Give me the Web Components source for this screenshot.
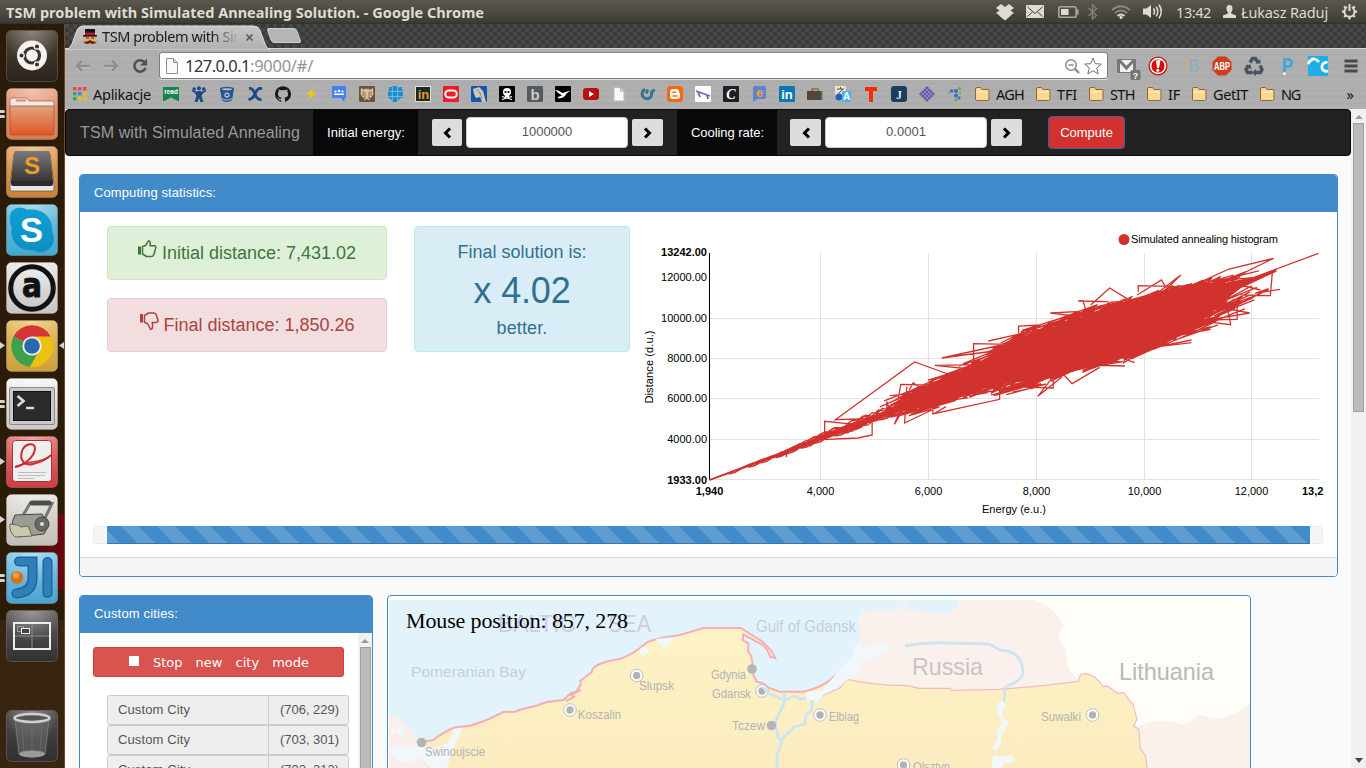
<!DOCTYPE html>
<html lang="en">
<head>
<meta charset="utf-8">
<title>TSM problem with Simulated Annealing Solution.</title>
<style>
html,body{margin:0;height:768px;width:1366px;overflow:hidden;background:#2d1b09}
body{font-family:"Liberation Sans",Arial,sans-serif;font-size:13px;color:#333}
</style>
</head>
<body>
<desktop-shell></desktop-shell>
<script>
const make = (name, css, html, after) => customElements.define(name, class extends HTMLElement {
  connectedCallback() {
    if (this.shadowRoot) return;
    const root = this.attachShadow({ mode: 'open' });
    root.innerHTML = `<style>:host{display:block;box-sizing:border-box}*{box-sizing:border-box}${css}</style>` +
      (typeof html === 'function' ? html(this) : html);
    if (after) after(this, root);
  }
});

/* ---------- icon library ---------- */
const fav = (bg, inner, r = 1) => `<rect width="16" height="16" rx="${r}" fill="${bg}"/>${inner}`;
const T = (t, x, y, s, f, extra = '') => `<text x="${x}" y="${y}" font-size="${s}" fill="${f}" text-anchor="middle" font-weight="bold" ${extra}>${t}</text>`;
const I = {
  apps: [16, 16, ['#ed4a3d','#ed4a3d','#ed4a3d','#30a756','#3b82f0','#fbbc05','#30a756','#fbbc05','#fbbc05'].map((c, i) => `<rect x="${1 + (i % 3) * 5}" y="${1 + (i / 3 | 0) * 5}" width="3.4" height="3.4" fill="${c}"/>`).join('')],
  read: [16, 16, `<path d="M0 1h16v14.500l-8-4-8 4z" fill="#13854a"/>` + T('read', 8, 8, 6.500, '#fff')],
  jira: [16, 16, `<g fill="#1d4a85"><circle cx="3.200" cy="3" r="1.800"/><circle cx="8" cy="2.200" r="2"/><circle cx="12.800" cy="3" r="1.800"/><path d="M1 5.500q3 .5 4.500 4.500L3.500 16h3L8 12l1.500 4h3l-2-6Q12 6 15 5.500V4q-4 .5-7 4-3-3.500-7-4z"/><path d="M6 5h4v4H6z"/></g>`],
  bucket: [16, 16, `<path d="M1 3l2 11c2 2.500 8 2.500 10 0l2-11z" fill="#27578f"/><ellipse cx="8" cy="3" rx="7" ry="2.300" fill="#27578f"/><ellipse cx="8" cy="3.200" rx="5" ry="1" fill="#aebfd2"/><circle cx="8" cy="9" r="2.600" fill="#b9c8d9"/><circle cx="8" cy="9" r="1.300" fill="#27578f"/><path d="M3 12.500c2 2 8 2 10 0" stroke="#b5b5b5" fill="none"/>`],
  conf: [16, 16, `<g stroke="#1d4a85" stroke-width="2.800" fill="none"><path d="M2 2.500q4-.5 6 5.500t6.500 5.500"/><path d="M13 2q-3 1-5 6t-6.500 5.500"/></g><g fill="#1d4a85"><circle cx="13.500" cy="2.500" r="1.800"/></g>`],
  github: [16, 16, `<path fill="#181818" fill-rule="evenodd" d="M8 .2a8 8 0 0 0-2.530 15.590c.4.070.550-.170.550-.380v-1.490c-2.230.480-2.690-.950-2.690-.950-.360-.920-.890-1.170-.890-1.170-.730-.5.060-.490.060-.490.800.060 1.230.830 1.230.830.710 1.220 1.870.870 2.330.660.070-.520.280-.870.510-1.070-1.780-.2-3.640-.890-3.640-3.950 0-.870.310-1.590.820-2.150-.080-.2-.360-1.020.080-2.120 0 0 .670-.210 2.200.820a7.600 7.600 0 0 1 4 0c1.530-1.040 2.200-.820 2.200-.820.440 1.100.160 1.920.080 2.120.510.560.820 1.270.820 2.150 0 3.070-1.870 3.750-3.650 3.950.290.250.540.730.540 1.480v2.200c0 .210.150.460.550.380A8 8 0 0 0 8 .2z"/>`],
  bolt: [16, 16, `<path d="M11 1L3.500 9h4L5 15l8-8.500H8.500z" fill="#fec502"/>`],
  groups: [16, 16, `<path d="M1 0h14v12h-1.500v4l-4-4H1z" fill="#4283f3"/><g fill="#fff"><circle cx="4.500" cy="5.500" r="1.100"/><circle cx="8" cy="5" r="1.300"/><circle cx="11.500" cy="5.500" r="1.100"/><path d="M3 9V7.500h10V9z"/></g>`],
  eagle: [16, 16, fav('#6e5236', `<path d="M8 3.500c-.5-2-3-1-2.300.5L2 2l-.5 6 2.500 4 2-1-1 3.500 3-1.500 3 1.500-1-3.500 2 1 2.500-4L14 2l-3.700 2C10 2.500 8.500 2 8 3.500z" fill="#d8c29c"/><path d="M4 5v5M6 6v7M10 6v7M12 5v5" stroke="#8f7455"/>`)],
  dots: [16, 16, `<g fill="#1a8fcf"><circle cx="8" cy="8" r="7"/><path d="M1 4h4v8H1zM5 0h6v16H5zM11 4h5v8h-5zM2 1h3v3H2zM12 1h3v3h-3z"/></g><path d="M5.300 0v16M10.600 0v16M0 5.300h16M0 10.600h16" stroke="#8cc3e0" stroke-width=".8"/>`],
  moodle: [16, 16, fav('#122d2c', `<rect x=".5" y=".5" width="15" height="15" fill="none" stroke="#e6e2bf"/>` + T('in', 8.500, 13, 13, '#f29222'))],
  oracle: [16, 16, fav('#ee1c25', `<rect x="2.300" y="4.500" width="11.500" height="7" rx="3.500" fill="none" stroke="#fff" stroke-width="2"/>`)],
  photo: [16, 16, fav('#1557a7', `<path d="M2 3l6-2 4 4 3 11h-4L9 11 5 12 3 8z" fill="#d0c8ba"/><path d="M6 3l3 4M9 7l2 6" stroke="#8c8276"/>`)],
  skull: [16, 16, fav('#000', `<circle cx="8" cy="6" r="4" fill="#fff"/><rect x="6" y="8.500" width="4" height="2.500" fill="#fff"/><circle cx="6.500" cy="6" r="1.100"/><circle cx="9.500" cy="6" r="1.100"/><path d="M3 10.500l10 3M13 10.500L3 13.500" stroke="#fff" stroke-width="1.200"/>`)],
  bgrey: [16, 16, fav('#555a5c', T('b', 8, 13.500, 15, '#c9cccc'))],
  bird: [16, 16, fav('#000', `<path d="M0 4q4 0 7.500 3L15.500 4.500 11 8q-1 4-8 4.500V11l4-1.500Q3 7 0 4z" fill="#fff"/>`)],
  yt: [16, 16, `<rect y="2" width="16" height="12" rx="3" fill="#b8120f"/><path d="M6 5l5 3-5 3z" fill="#fff"/>`],
  doc: [16, 16, `<path d="M3 1.500h6.500L13 5v10H3z" fill="#f8f8f8" stroke="#bdbdbd"/><path d="M9.500 1.500V5H13" fill="#ddd" stroke="#aaa"/>`],
  swirl: [16, 16, `<path d="M6 3.500A4.800 4.800 0 1 0 12.500 6.500L15.500 3.500M7.500 7.500l1-4" stroke="#37708f" stroke-width="3" fill="none"/>`],
  blogger: [16, 16, fav('#f9690b', `<path d="M6 3h3q3 0 3 3 0 1 1 1v3q0 3-3 3H6q-3 0-3-3V6q0-3 3-3z" fill="#fff"/><path d="M6 6.300h2.500M6 9.900h4" stroke="#f9690b" stroke-width="1.500" stroke-linecap="round"/>`, 3)],
  slope: [16, 16, fav('#fff', `<path d="M1 5l14 5M3 6l2 5M12 9l1 4" stroke="#7c5fb5" stroke-width="1.800"/>`)],
  cbox: [16, 16, fav('#1e1e26', T('C', 8, 13, 14, '#fff', 'font-style="italic" font-family="Liberation Serif"'))],
  echat: [16, 16, `<path d="M3 0h10q2 0 2 2v9q0 2-2 2H6l-4 3V2z" fill="#5b86cf"/>` + T('e', 8.500, 10.500, 13, '#f6a12d')],
  linkedin: [16, 16, fav('#0b77b5', T('in', 8, 13, 13, '#fff'))],
  bag: [16, 16, `<rect x="0" y="5" width="16" height="9" fill="#55433c"/><path d="M5 5V3h6v2" fill="none" stroke="#6e7b57" stroke-width="1.500"/><path d="M14.500 5h1.500v9h-1.500z" fill="#6aa07e"/>`],
  trans: [16, 16, `<rect x="0" y="0" width="11" height="9" fill="#e7e3cd"/><path d="M2 3h7M5.500 1v2M3 8l5-5" stroke="#555"/><circle cx="4" cy="11" r="3.500" fill="#1e63b5"/><rect x="7" y="5" width="9" height="11" rx="1" fill="#47b4ee"/>` + T('A', 11.500, 14, 10, '#fff')],
  tred: [16, 16, `<path d="M2 1h12v4H10v11H6V5H2z" fill="#f52c07"/>`],
  djs: [16, 16, fav('#1c3d5e', T('J', 8, 12.500, 12, '#dfe8f0', 'font-family="Liberation Serif"'), 3)],
  diamond: [16, 16, `<path d="M8 0l8 8-8 8-8-8z" fill="#625da8"/><path d="M4 4l8 8M6 2l8 8M2 6l8 8M12 4l-8 8M14 6l-8 8M10 2L2 10" stroke="#a9a6cd" stroke-width=".6"/>`],
  plant: [16, 16, `<g fill="#2e72c0"><circle cx="4.500" cy="5" r="1.800"/><circle cx="9" cy="5" r="2"/><circle cx="9" cy="9.500" r="2"/><circle cx="12" cy="12" r="1.500"/></g><g fill="#78a832"><circle cx="12.500" cy="2.500" r="1.500"/><circle cx="1.500" cy="7" r="1.100"/><circle cx="9" cy="14" r="1.400"/><circle cx="13" cy="7" r="1"/></g>`],
  folder: [16, 16, `<path d="M1.500 3q0-1.500 1.500-1.500h3.500l1.500 2h6q1 0 1 1V13q0 1.500-1.500 1.500h-11Q1.500 14.500 1.500 13z" fill="#fbd78f" stroke="#8d673a"/><path d="M2.500 6h11" stroke="#fff3d0"/>`],
  man: [14, 16, `<rect x="2" y="0" width="10" height="6" fill="#151515"/><rect x="2" y="3.500" width="10" height="2.500" fill="#c2182b"/><rect x="0" y="6" width="14" height="1.800" rx=".9" fill="#181818"/><rect x="1.500" y="7.800" width="11" height="7.500" rx="3" fill="#f2a85c"/><path d="M0 12.500q4 1 7-1.500 3 2.500 7 1.500-3 4-7 1.500-4 2.500-7-1.500z" fill="#5a2512"/><path d="M3 9h3M8 9h3" stroke="#333"/>`],
  back: [18, 16, `<path d="M8 3L3 8l5 5M3 8h13" fill="none" stroke="#eee" stroke-opacity=".5" stroke-width="2.400" transform="translate(0 1)"/><path d="M8 3L3 8l5 5M3 8h13" fill="none" stroke="#8f8f8f" stroke-width="2.600"/>`],
  fwd: [18, 16, `<path d="M10 3l5 5-5 5M15 8H2" fill="none" stroke="#eee" stroke-opacity=".5" stroke-width="2.400" transform="translate(0 1)"/><path d="M10 3l5 5-5 5M15 8H2" fill="none" stroke="#8f8f8f" stroke-width="2.600"/>`],
  reload: [16, 16, `<path d="M12.500 4.300a5.700 5.700 0 1 0 1 5.500" fill="none" stroke="#505050" stroke-width="2.500"/><path d="M15 0.500v7H8z" fill="#505050"/>`],
  page: [12, 16, `<path d="M.5.500h7l4 4v11H.500z" fill="#fafafa" stroke="#8d8d8d"/><path d="M7.500.500v4h4" fill="#ddd" stroke="#8d8d8d"/>`],
  mag: [16, 16, `<circle cx="7" cy="7" r="5.300" fill="none" stroke="#8a8a8a" stroke-width="1.500"/><path d="M11 11l4 4" stroke="#8a8a8a" stroke-width="2.400"/><path d="M4.500 7h5" stroke="#777" stroke-width="1.300"/>`],
  star: [18, 18, `<path d="M9 1l2.300 5.700 6 .4-4.600 3.900 1.500 6L9 13.700 3.800 17l1.500-6L.7 7.100l6-.4z" fill="#fff" stroke="#6f6f6f" stroke-linejoin="round"/>`],
  gmail: [24, 22, `<rect x="0" y="1" width="19" height="14" fill="#777"/><path d="M3 2h13v12H3z" fill="#f0f0f0"/><path d="M2 2l7.500 8L17 2" fill="none" stroke="#777" stroke-width="3"/><rect x="13.500" y="12" width="10" height="10" rx="1.500" fill="#757575"/>` + T('?', 18.500, 20.500, 9, '#fff')],
  alert: [20, 20, `<circle cx="10" cy="10" r="9.500" fill="#d80c0c"/><circle cx="10" cy="10" r="7.400" fill="none" stroke="#fff" stroke-width="1.600"/><path d="M8 4.500l4.500-.5-1.500 8H9z" fill="#fff"/><circle cx="9.800" cy="14.300" r="1.500" fill="#fff"/>`],
  jb: [20, 18, `<text x="0" y="15" font-size="17.500" textLength="20" lengthAdjust="spacingAndGlyphs"><tspan fill="#c9ae82">J</tspan><tspan fill="#90adbd">B</tspan></text>`],
  abp: [20, 20, `<path d="M6 .5h8L19.500 6v8L14 19.500H6L.5 14V6z" fill="#d13c1b"/><text x="2" y="13.700" font-size="10.500" font-weight="bold" fill="#fff" textLength="16" lengthAdjust="spacingAndGlyphs">ABP</text>`],
  recycle: [20, 20, `<g fill="none" stroke="#47535e" stroke-width="3.400"><path d="M6 6.500L8.500 2.500h3L14 6.500"/><path d="M16 9.500l2 4-1.500 3H11"/><path d="M8.500 16.500H3.500L2 13.500l2.500-4"/></g><g fill="#47535e"><path d="M11.500 7.500h5V3z"/><path d="M12 13v7l-4-3.500z"/><path d="M1 9.500l5.500-1 1 5z"/></g>`],
  pp: [14, 20, `<path d="M3.500 16V3.200h3.500a3.700 3.700 0 0 1 0 7.400H3.500" fill="none" stroke="#3ba4e2" stroke-width="2.500"/><circle cx="3.500" cy="17.800" r="1.400" fill="#fff"/>`],
  cloud: [20, 20, `<rect width="20" height="20" fill="#1fafe6"/><path d="M0 8q5-9 11-2M19.500 6.500a4.500 4.500 0 1 0 .5 8.500" fill="none" stroke="#fff" stroke-width="2.800"/>`],
  menu: [14, 14, `<path d="M.5 2h13M.5 7h13M.5 12h13" stroke="#484848" stroke-width="2.800"/>`],
  dropbox: [20, 18, `<g fill="#dfdbd2"><path d="M6 1l4 3 4-3 5 4-3.500 2.500L19 10l-5 3.500-4-3-4 3L1 10l3.500-2.500L1 5z"/><path d="M4.500 13l5.500 4.500 5.500-4.500V10L10 8l-5.500 2z"/></g>`],
  mail: [18, 13, `<rect width="18" height="13" rx="1" fill="#dfdbd2"/><path d="M1.500 2L9 8.500 16.500 2M1.500 11.500l5-4.500M16.500 11.500L11.500 7" stroke="#45433d" fill="none"/>`],
  battery: [21, 12, `<rect x=".8" y=".8" width="17.400" height="10.400" rx="1.800" fill="none" stroke="#a9a69e" stroke-width="1.600"/><rect x="3" y="3" width="7.500" height="6" fill="#dfdbd2"/><rect x="18.500" y="3.500" width="2" height="5" fill="#a9a69e"/>`],
  bt: [11, 16, `<path d="M1.500 4l8 7.500L5.500 15V1l4 3.500-8 7.500" fill="none" stroke="#86837b" stroke-width="1.300"/>`],
  wifi: [20, 14, `<g fill="none" stroke-width="1.900"><path d="M1 5Q10-2.500 19 5" stroke="#8b8880"/><path d="M3.800 8Q10 2.800 16.200 8" stroke="#8b8880"/><path d="M6.500 11Q10 7.800 13.500 11" stroke="#dfdbd2"/></g><circle cx="10" cy="12.400" r="1.600" fill="#dfdbd2"/>`],
  vol: [21, 15, `<path d="M0 4.500h3.500L8 1v13L3.500 10.500H0z" fill="#dfdbd2"/><path d="M10.500 4.500q2 3 0 6M13.200 2.700q3.200 4.800 0 9.600M16 .8q4.500 6.700 0 13.400" fill="none" stroke="#dfdbd2" stroke-width="1.600"/>`],
  user: [13, 13, `<path d="M6.500 0c2.500 0 3.200 2 3 4-.2 1.500-.8 2.500-1.300 3.200v1.300l4.800 2V13H0v-2.500l4.800-2V7.200C4.300 6.500 3.700 5.500 3.500 4c-.2-2 .5-4 3-4z" fill="#dfdbd2"/>`],
  gear: [17, 17, `<circle cx="8.500" cy="8.700" r="5" fill="none" stroke="#dfdbd2" stroke-width="2"/><path d="M1 8.700h2.500M13.500 8.700H16M8.500 14v2.500M3.200 3.400l1.800 1.800M13.800 3.400L12 5.200M3.200 14L5 12.200M13.800 14L12 12.200" stroke="#dfdbd2" stroke-width="2.200"/><path d="M6.300 1h4.400v6H6.300z" fill="#4c4a43"/><path d="M8.500 1v7" stroke="#dfdbd2" stroke-width="2"/>`],
  left: [10, 12, `<path d="M8 1.500L3.500 6 8 10.500" fill="none" stroke="#000" stroke-width="3"/>`],
  right: [10, 12, `<path d="M2 1.500L6.500 6 2 10.500" fill="none" stroke="#000" stroke-width="3"/>`],
  up: [19, 18, `<path d="M0 6.500h3v8H0z" fill="currentColor"/><path d="M4.500 6.500l3-1L10.500.800q2.500 0 1.500 4.900h4.500q2 .5 1 3l-1.800 6.300q-.7 1.500-2.500 1.500H8.500l-4-2.500z" fill="none" stroke="currentColor" stroke-width="1.500" stroke-linejoin="round"/>`],
  down: [19, 18, `<path d="M0 2h3v8.500H0z" fill="currentColor"/><path d="M4.500 3.500l4-2.500h5.500q2 .3 2.500 2.500l1.500 5q0 2-2.500 2h-3.300q1 5-.5 6.700h-1.200l-3-5.700-3-1z" fill="none" stroke="currentColor" stroke-width="1.500" stroke-linejoin="round"/>`]
};
make('ui-icon', ':host{flex:none;line-height:0}svg{display:block;width:100%;height:100%;overflow:visible;font-family:"Liberation Sans",Arial,sans-serif}',
  e => { const [w, h, s] = I[e.getAttribute('name')]; return `<style>:host{width:${w}px;height:${h}px}</style><svg viewBox="0 0 ${w} ${h}">${s}</svg>`; });

/* ---------- launcher ---------- */
const gl = (id, a, b) => `<linearGradient id="${id}" x2="0" y2="1"><stop stop-color="${a}"/><stop offset="1" stop-color="${b}"/></linearGradient>`;
const L = {
  dash: ['#4f4539', '#2a231b', `<circle cx="26" cy="25.500" r="15" fill="#f4f2f0"/><circle cx="26" cy="25.500" r="7.500" fill="none" stroke="#3c342c" stroke-width="3.200"/><g fill="#3c342c" stroke="#f4f2f0" stroke-width="1.300"><circle cx="15.500" cy="25.500" r="2.700"/><circle cx="31" cy="16.500" r="2.700"/><circle cx="31" cy="34.500" r="2.700"/></g>`],
  files: ['#e9a687', '#dd7a50', `<path d="M4 12q0-2 2-2h14q2 0 3 3h23q2 0 2 2v6H4z" fill="#eceae8" stroke="#b2593a" stroke-width=".7"/><path d="M10 12.500h10" stroke="#e08a60" stroke-width="2"/><path d="M4 18h44v27q0 2-2 2H6q-2 0-2-2z" fill="url(#f)" stroke="#a94a28" stroke-width=".7"/>`, gl('f', '#dfa47d', '#df5628')],
  sublime: ['#e6a865', '#ca8137', `<path d="M8 8h36l4 31v4q0 2-2 2H6q-2 0-2-2v-4z" fill="#e7e7e7" stroke="#6b4a24" stroke-width=".7"/><path d="M10 5h32q2 0 2 2l3 28H5L8 7q0-2 2-2z" fill="url(#f)"/><path d="M5 35h42v3q0 2-2 2H7q-2 0-2-2z" fill="#2b2b2b"/><text x="26" y="28" font-size="24" font-weight="bold" font-family="Liberation Sans" text-anchor="middle" fill="#f49b26">S</text>`, gl('f', '#7a7a7a', '#353535')],
  skype: ['#7ac6e2', '#3fa9d0', `<path d="M4 14C4 4 14 2 21 6c16-2 26 8 25 22 5 10-2 20-12 20-4 0-6-2-8-2C12 47 4 36 6 24q-2-4-2-10z" fill="url(#f)" stroke="#2b8dbd" stroke-width=".6"/><text x="25.500" y="38" font-size="35" font-weight="bold" font-family="Liberation Sans" text-anchor="middle" fill="#fff">S</text>`, gl('f', '#0f9fd4', '#0b8fc4')],
  audi: ['#e8e8e8', '#c6c6c6', `<circle cx="26" cy="26" r="21.300" fill="none" stroke="#111" stroke-width="5"/><text x="16" y="35" font-size="34" font-weight="bold" font-family="DejaVu Sans" fill="#111" stroke="#111" textLength="20" lengthAdjust="spacingAndGlyphs">a</text>`],
  chrome: ['#e5bd62', '#caa03e', `<circle cx="26" cy="26" r="21" fill="#f2c80f"/><path d="M26 26L7.500 16.500A21 21 0 0 1 44.600 16.500z" fill="#d8323a"/><path d="M26 26L7.500 16.500A21 21 0 0 0 24 47l9-16z" fill="#3ea04e"/><path d="M26 16.500h18.600A21 21 0 0 1 24 47l9-16z" fill="#ecc212"/><circle cx="26" cy="26" r="9.600" fill="#eef0f2"/><circle cx="26" cy="26" r="7.800" fill="#2868ad"/>`],
  term: ['#f5f5f5', '#c9c9c9', `<rect x="3.500" y="9.500" width="45" height="37" rx="1.500" fill="#c9c9c9" stroke="#8b8b8b"/><rect x="7.500" y="13.500" width="37" height="29" fill="#2b2b2b" stroke="#111"/><path d="M11.500 18l6 5-6 5" fill="none" stroke="#ddd" stroke-width="2.600"/><path d="M20 30h8" stroke="#ddd" stroke-width="2.400"/>`],
  pdf: ['#e67575', '#d13b43', `<rect x="6.500" y="4.500" width="39" height="41" rx="3" fill="#efefef" stroke="#9b3a3a"/><path d="M9 31c8-1 20-10 20-19 0-6-10-5-13 3-3 10 3 15 11 13 8-2 14-4 18-9" fill="none" stroke="#cf2a30" stroke-width="2"/><path d="M9 31q10-4 17-5 12-1 19-7" fill="none" stroke="#cf2a30" stroke-width="1.600"/><path d="M12 36.500h28M12 39.500h27M12 42.500h16" stroke="#bdbdbd"/>`],
  roller: ['#e3e2dc', '#c1bfb5', `<path d="M16 23L24 9.500h22L38 26" fill="none" stroke="#777" stroke-width="3"/><path d="M26 9h17" stroke="#4c4c4c" stroke-width="5" stroke-linecap="round"/><path d="M9 21l27-1q8 12 2 20l-26 3Q2 34 9 21z" fill="#9c9c96" stroke="#45453f"/><path d="M4 30l8 1 3 2 7-1 4 10-17 1q-6-5-5-13z" fill="#cac9ac" stroke="#6a6a58"/><circle cx="36" cy="30" r="7" fill="#6a6a64" stroke="#454540"/><circle cx="36" cy="30" r="2" fill="#ddd"/>`],
  ij: ['#86cbea', '#4aa2d0', `<path d="M13 9.500H26.500V26q0 14-16 15.500" fill="none" stroke="#1c5f97" stroke-width="10" stroke-linecap="round"/><path d="M13 9.500H26.500V26q0 14-16 15.500" fill="none" stroke="#2e80ba" stroke-width="7.500" stroke-linecap="round"/><path d="M41.500 10v31" stroke="#1c5f97" stroke-width="10" stroke-linecap="round"/><path d="M41.500 10v31" stroke="#2e80ba" stroke-width="7.500" stroke-linecap="round"/><circle cx="11" cy="25.500" r="6.300" fill="#d8720e"/><circle cx="10" cy="23.500" r="3" fill="#eea050"/>`],
  wksp: ['#606060', '#303030', `<rect x="8" y="13" width="36" height="26" fill="none" stroke="#eee" stroke-width="2"/><path d="M26 14v24M9 26h34" stroke="#8d8d8d"/><rect x="11.500" y="16.500" width="6" height="5" fill="none" stroke="#999"/><rect x="15.500" y="18.500" width="8" height="5" fill="#444" stroke="#eee"/>`],
  trash: ['#4b4b4b', '#303030', `<path d="M9 9l4 35q13 6 26 0l4-35z" fill="#666" fill-opacity=".65" stroke="#777"/><path d="M16 14l2 28M26 15v30M36 14l-2 28" stroke="#777" stroke-opacity=".5"/><ellipse cx="26" cy="44" rx="13" ry="3.500" fill="#999"/><ellipse cx="26" cy="8" rx="17.500" ry="4" fill="#555" stroke="#cfcfcf" stroke-width="2.600"/>`]
};
make('launcher-tile', ':host{flex:none;width:52px;height:52px;position:relative}svg{display:block}i{position:absolute;background:#d6d4d1}.d1,.d2{left:-6px;width:5px;height:3px;border-radius:0 2px 2px 0}.d1{top:22px}.d2{top:27px}.ar{left:-6px;top:22px;width:5px;height:7px;clip-path:polygon(0 0,100% 50%,0 100%)}.al{left:53px;top:22px;width:5px;height:7px;clip-path:polygon(100% 0,0 50%,100% 100%)}',
  e => { const [a, b, s, d = ''] = L[e.getAttribute('app')]; const r = e.getAttribute('run');
    return `<svg width="52" height="52" viewBox="0 0 52 52"><defs>${gl('bg', a, b)}${d}<radialGradient id="h" cx=".5" cy="0" r=".6"><stop stop-color="#fff" stop-opacity=".35"/><stop offset="1" stop-color="#fff" stop-opacity="0"/></radialGradient></defs><rect x=".5" y=".5" width="51" height="51" rx="5" fill="url(#bg)" stroke="#fff" stroke-opacity=".18"/><rect x="1" y="1" width="50" height="50" rx="5" fill="url(#h)"/>${s}</svg>` +
      (r === '2' ? '<i class="d1"></i><i class="d2"></i>' : r ? '<i class="ar"></i>' : '') + (r === 'f' ? '<i class="al"></i>' : ''); });
make('side-launcher', ':host{width:65px;height:744px;padding:6px;display:flex;flex-direction:column;gap:6px;border-right:1px solid #70492a;background:linear-gradient(90deg,transparent 30px,#4d0a0d 40px,#6c070f) 0 490px/65px 76px no-repeat,linear-gradient(#2b1b09 0,#2b1b09 595px,#39240f 597px,#39240f)}.end{margin-top:auto}',
  `<launcher-tile app="dash"></launcher-tile><launcher-tile app="files" run="2"></launcher-tile><launcher-tile app="sublime"></launcher-tile><launcher-tile app="skype"></launcher-tile><launcher-tile app="audi"></launcher-tile><launcher-tile app="chrome" run="f"></launcher-tile><launcher-tile app="term" run="2"></launcher-tile><launcher-tile app="pdf" run="1"></launcher-tile><launcher-tile app="roller" run="1"></launcher-tile><launcher-tile app="ij" run="2"></launcher-tile><launcher-tile app="wksp"></launcher-tile><launcher-tile class="end" app="trash"></launcher-tile>`);

/* ---------- top bar ---------- */
make('system-bar', ':host{height:24px;display:flex;align-items:center;padding:0 8px 1px 6px;background:linear-gradient(#5b584e,#3e3c37 92%,#2f2e2a);color:#dfdbd2;font:14.500px "Noto Sans","Open Sans",sans-serif;white-space:nowrap}.t{font-weight:bold;margin-right:auto}',
  `<fit-text class="t" w="478">TSM problem with Simulated Annealing Solution. - Google Chrome</fit-text>
  <ui-icon name="dropbox" style="margin-right:-1px"></ui-icon><ui-icon name="mail" style="margin-left:12px"></ui-icon><ui-icon name="battery" style="margin-left:14px"></ui-icon><ui-icon name="bt" style="margin-left:8px"></ui-icon><ui-icon name="wifi" style="margin-left:13px"></ui-icon><ui-icon name="vol" style="margin-left:12px"></ui-icon><fit-text w="35" style="margin-left:12px">13:42</fit-text><ui-icon name="user" style="margin-left:12px"></ui-icon><fit-text w="87" style="margin-left:5px">Łukasz Raduj</fit-text><ui-icon name="gear" style="margin-left:13px"></ui-icon>`);

/* ---------- browser ---------- */
const metal = 'repeating-linear-gradient(#b2b2b2 0,#a9a9a9 1px,#b5b5b5 2px,#adadad 3px,#b0b0b0 5px,#a7a7a7 6px,#b3b3b3 7px)';
make('tab-strip', ':host{height:25px;display:flex;align-items:flex-end;padding-left:1px;background:#424242 conic-gradient(#3a3a3a 25%,#484848 0 50%,#3a3a3a 0 75%,#484848 0) 0 0/8px 8px;border-bottom:1px solid #d5d5d5;font:14.500px "Noto Sans",sans-serif}.tab{position:relative;width:204px;height:24px;margin-bottom:-1px;display:flex;align-items:center;padding-left:17px;color:#1c1c1c}.bg{position:absolute;left:0;top:0}.tab>*:not(.bg){position:relative}.ttl{margin:-2px 0 0 5px;width:137px;overflow:hidden;white-space:nowrap;-webkit-mask:linear-gradient(90deg,#000 110px,transparent 137px)}.x{margin-left:6px}.new{margin:0 0 5px -1px;width:30px;height:15px;transform:skewX(20deg);border-radius:3px;background:#b5b5b5;border:1px solid #cfcfcf}',
  `<div class="tab"><svg class="bg" width="204" height="25"><defs>${gl('g', '#c6c6c6', '#b0b0b0')}</defs><path d="M0 25q4-1 6-6L11 5q2-4 6-4h171q4 0 6 4l5 14q2 5 5 6z" fill="url(#g)" stroke="#dedede"/></svg><ui-icon name="man"></ui-icon><div class="ttl"><fit-text w="185">TSM problem with Simulated</fit-text></div><svg class="x" width="9" height="9"><path d="M1.500 1.500l6 6M7.500 1.500l-6 6" stroke="#555" stroke-width="1.600"/></svg></div><div class="new"></div>`);
make('tool-bar', `:host{height:35px;display:flex;align-items:center;background:${metal};padding:0 0 2px 9px}.omni{margin-left:11px;width:949px;height:27px;border:1px solid #7d7d7d;border-radius:3px;background:#fff;display:flex;align-items:center;padding-left:6px;box-shadow:0 1px #ddd;font:16.500px "Noto Sans",sans-serif;color:#333}.g{color:#949494}.sp{flex:1}`,
  `<ui-icon name="back"></ui-icon><ui-icon name="fwd" style="margin-left:10px"></ui-icon><ui-icon name="reload" style="margin-left:12px"></ui-icon><div class="omni"><ui-icon name="page"></ui-icon><fit-text w="65" style="margin-left:7px">127.0.0.1</fit-text><fit-text w="63" class="g">:9000/#/</fit-text><span class="sp"></span><ui-icon name="mag" style="margin-right:-1px"></ui-icon><ui-icon name="star" style="margin:0 5px"></ui-icon></div><ui-icon name="gmail" style="margin:6px 0 0 9px"></ui-icon><ui-icon name="alert" style="margin-left:7px"></ui-icon><ui-icon name="jb" style="margin-left:12px"></ui-icon><ui-icon name="abp" style="margin-left:12px"></ui-icon><ui-icon name="recycle" style="margin-left:12px"></ui-icon><ui-icon name="pp" style="margin-left:17px"></ui-icon><ui-icon name="cloud" style="margin-left:13px"></ui-icon><ui-icon name="menu" style="margin-left:16px"></ui-icon>`);
const favs = 'read jira bucket conf github bolt groups eagle dots moodle oracle photo skull bgrey bird yt doc swirl blogger slope cbox echat linkedin bag trans tred djs diamond plant'.split(' ');
const dirs = [['AGH', 28], ['TFI', 20], ['STH', 25], ['IF', 12], ['GetIT', 35], ['NG', 19]];
make('bookmarks-bar', `:host{height:25px;display:flex;align-items:center;background:${metal};padding:0 12px 6px 7px;font:14.500px "Noto Sans",sans-serif;color:#111}.l{margin:1px 12px 0 5px}.more{margin-left:auto}`,
  `<ui-icon name="apps"></ui-icon><fit-text w="58" class="l">Aplikacje</fit-text>` + favs.map(f => `<ui-icon name="${f}" style="margin-right:12px"></ui-icon>`).join('') +
  dirs.map(([n, w]) => `<ui-icon name="folder" style="margin-left:-1px"></ui-icon><fit-text w="${w}" class="l" style="margin-left:6px">${n}</fit-text>`).join('') + `<span class="more">»</span>`);

/* ---------- page ---------- */
make('spin-field', ':host{display:flex;align-items:center;gap:4px}button{all:unset;width:var(--l,30px);height:27px;background:#ddd;border-radius:2px;display:flex;align-items:center;justify-content:center;box-sizing:border-box}button.r{width:31px}.v{width:162px;height:31px;background:#fff;border:1px solid #ccc;border-radius:4px;color:#555;text-align:center;line-height:28px;font-size:13px}',
  e => `<button><ui-icon name="left"></ui-icon></button><div class="v">${e.getAttribute('value')}</div><button class="r"><ui-icon name="right"></ui-icon></button>`);
make('nav-bar', ':host{height:47px;background:#222;border:1px solid #080808;border-radius:4px;display:flex;align-items:stretch;color:#fff;line-height:46px}.b{margin-left:14px;font-size:16px;color:#999;width:233px;line-height:45px}.k{background:#080808;width:105px;padding-left:14px}.k.c{width:100px;margin-left:14px}spin-field{margin-left:14px}.w{--l:31px;margin-left:13px}.go{margin:6px 0 0 26px;width:77px;height:33px;border:1px solid #3a5fa8;border-radius:4px;background:#d2322d;text-align:center;line-height:32px}',
  `<div class="b"><fit-text w="220">TSM with Simulated Annealing</fit-text></div><div class="k"><fit-text w="78">Initial energy:</fit-text></div><spin-field value="1000000"></spin-field><div class="k c"><fit-text w="73">Cooling rate:</fit-text></div><spin-field class="w" value="0.0001"></spin-field><div class="go">Compute</div>`);
make('info-panel', ':host{display:flex;flex-direction:column;background:#fff;border:1px solid #428bca;border-radius:4px;overflow:hidden}header{height:37px;flex:none;background:#428bca;color:#fff;padding-left:14px;line-height:35px}',
  e => (e.hasAttribute('heading') ? `<header><fit-text w="${e.getAttribute('hw')}">${e.getAttribute('heading')}</fit-text></header>` : '') + '<slot></slot>');
make('alert-box', ':host{border:1px solid;border-radius:4px;display:flex;align-items:center;justify-content:center;height:54px;font-size:18px}:host([kind=ok]){background:#dff0d8;border-color:#d0e6c0;color:#3c763d}:host([kind=bad]){background:#f2dede;border-color:#ebccd1;color:#a94442}:host([kind=info]){background:#d9edf7;border-color:#bce8f1;color:#31708f;height:126px;flex-direction:column;line-height:26px}', '<slot></slot>');

make('energy-chart', 'svg{display:block;font:11px "Liberation Sans",Arial,sans-serif}text{fill:#000}', () => {
  let s = 7; const rnd = () => (s = (s * 16807) % 2147483647) / 2147483647;
  const up = [[-197,748],[0,670],[113,616],[190,583],[250,560],[300,540],[350,512],[420,475],[520,430],[600,380],[700,312],[830,268],[960,218],[1080,190],[1200,168],[1260,155],[1330,140],[1390,117]];
  const lo = [[-197,752],[0,678],[113,633],[200,600],[250,578],[330,548],[420,525],[500,495],[600,465],[700,452],[800,425],[870,398],[980,370],[1050,340],[1120,310],[1180,270],[1230,225],[1290,175],[1390,125]];
  const at = (p, x) => { for (let i = 1; i < p.length; i++) if (x <= p[i][0]) { const [a, b] = [p[i - 1], p[i]]; return a[1] + (b[1] - a[1]) * (x - a[0]) / (b[0] - a[0]); } return p[p.length - 1][1]; };
  /* each excursion leaves the band, peaks outside its edge and returns */
  let d = '';
  for (let i = 0; i < 460; i++) {
    const x = 360 + rnd() * 890, top = i % 2, g = top ? -1 : 1, e = at(top ? up : lo, x);
    const dir = rnd() < .6 ? g : -g, w = 30 + rnd() * 90, w2 = w * (.3 + rnd() * .7), k = .3 + rnd() * .12;
    const py = e + g * (rnd() * rnd() * 30 - 2);
    d += `M${(x + dir * w).toFixed(1)} ${(py - dir * w * k - g * 8).toFixed(1)}L${x.toFixed(1)} ${py.toFixed(1)}L${(x + dir * w2).toFixed(1)} ${(py - dir * w2 * k - g * (14 + rnd() * 14)).toFixed(1)}`;
  }
  for (let i = 0; i < 46; i++) { const x = -130 + rnd() * 540, e = at(i % 2 ? up : lo, x), k = 3 + Math.max(0, x) * .03; d += `M${x - 14} ${e + 6}l18 ${(i % 2 ? -k : k * .3) - 6}l${10 + k} ${i % 2 ? k - 7 : -k - 6}`; }
  d += 'M470 432L377 396 155 569 240 566M125 628V574L210 583 258 575V615L218 624 113 629M340 535L320 583 350 530M355 470L349 579 425 540M430 552L465 530M428 540V552L615 508V465M790 440L722 499 765 440V474L640 470M680 455L705 476 730 460M795 435L818 461 895 412M870 225L923 174 990 218M1000 195L1068 150 1085 180M1050 195L1122 135 1075 185M1003 185V167L1130 170M840 260L757 249 830 245M620 345L453 384 620 360M560 420L433 406 560 404M520 415L415 450 520 430M542 405V341L640 343M583 333L700 305M668 310V288L730 285M855 235L848 212 835 213 920 215M1180 155L1257 117 1382 85 1220 170M1240 152L1305 125 1260 160M1508 70L1270 165M1379 122L1373 197 1290 195M1400 178L1330 190 1368 176M1368 178L1270 230M1290 165L1345 180M1280 215V268L1190 270M1315 249L1220 230M1315 249L1210 268M1252 230L1262 284 1170 272M1206 298L1120 315 1206 290M1152 338L1060 350 1152 330M308 497L410 488M325 548L338 463 420 465M299 550V514L310 550M362 480L373 458 400 480M18 682V670L-5 678M60 640L75 630M568 488L610 480 590 490M966 408L860 405M993 398L960 385';
  const body = 'M' + up.concat(lo.slice().reverse()).map(p => p.join(' ')).join('L') + 'z';
  const gx = [[820.5, '4,000'], [928.5, '6,000'], [1036.5, '8,000'], [1144.5, '10,000'], [1251.5, '12,000']];
  const gy = [[277, '12000.00'], [318, '10000.00'], [358, '8000.00'], [398, '6000.00'], [439, '4000.00']];
  return `<svg width="697" height="314" viewBox="640 212 697 314">
  <g stroke="#e3e3e3">${gx.map(g => `<path d="M${g[0]} 253V480"/>`).join('')}${gy.slice(1).map(g => `<path d="M710 ${g[0] + .5}H1319"/>`).join('')}<path d="M710 479.500H1319"/></g>
  <path d="M709.500 253V480" stroke="#000"/>
  <g transform="translate(780 230) scale(.35714 .33333)"><path d="${body}" fill="#d2322d"/><path d="${d}" fill="none" stroke="#d2322d" stroke-width="1.300" vector-effect="non-scaling-stroke"/></g>
  <path d="M709.500 480L820 438" stroke="#d2322d" stroke-width="1.500"/>
  <circle cx="1124" cy="239.500" r="5.500" fill="#d2322d"/><text x="1131" y="243" textLength="147">Simulated annealing histogram</text>
  <g text-anchor="end">${gy.map(g => `<text x="707" y="${g[0] + 4}">${g[1]}</text>`).join('')}<text x="707" y="256" font-weight="bold">13242.00</text><text x="707" y="484" font-weight="bold">1933.00</text></g>
  <g text-anchor="middle">${gx.map(g => `<text x="${g[0]}" y="495">${g[1]}</text>`).join('')}<text x="709.500" y="495" font-weight="bold">1,940</text><text x="1014" y="513" textLength="64">Energy (e.u.)</text><text transform="translate(653 367) rotate(-90)" textLength="73">Distance (d.u.)</text></g>
  <text x="1302" y="495" font-weight="bold">13,2</text></svg>`;
});
make('stats-view', '.r{display:flex;padding-left:27px;height:314px}.c{width:280px;margin-top:14px;display:flex;flex-direction:column;gap:18px}.i{width:216px;margin:14px 10px 0 27px}.big{line-height:51px;font-size:36px}.ic{margin:-8px 5px 0 0}.p{margin:0 14px 0 13px;height:18px;border:1px solid #ebebeb;background:#f5f5f5;border-radius:4px;display:flex;padding:0 12px 0 13px}.p i{flex:1;margin:-1px 0;background:linear-gradient(45deg,#ffffff26 25%,transparent 25%,transparent 50%,#ffffff26 50%,#ffffff26 75%,transparent 75%) 13px 0/36px 36px #428bca;box-shadow:inset 0 -1px #3478b4}.f{margin-top:13px;height:19px;border-top:1px solid #ddd;background:#f5f5f5}',
  `<div class="r"><div class="c"><alert-box kind="ok"><ui-icon class="ic" name="up"></ui-icon><fit-text w="194">Initial distance: 7,431.02</fit-text></alert-box><alert-box kind="bad"><ui-icon class="ic" name="down"></ui-icon><fit-text w="191">Final distance: 1,850.26</fit-text></alert-box></div><alert-box class="i" kind="info"><fit-text w="129" style="margin-top:1px">Final solution is:</fit-text><fit-text w="97" class="big">x 4.02</fit-text><fit-text w="51" style="margin:-1px 0 0">better.</fit-text></alert-box><energy-chart></energy-chart></div><div class="p"><i></i></div><div class="f"></div>`);

make('scroll-rail', ':host{width:15px;background:#f1f1f1;display:flex;flex-direction:column;align-items:center}.u{margin-top:6px;border:4px solid transparent;border-top:0;border-bottom:4px solid #9b9b9b}.t{margin-top:4px;width:11px;background:#bbb;border:1px solid #a0a0a0}.d{margin:auto 0 5px;border:4px solid transparent;border-bottom:0;border-top:5px solid #454545}',
  e => `<div class="u"></div><div class="t" style="height:${e.getAttribute('thumb')}px"></div>${e.hasAttribute('down') ? '<div class="d"></div>' : ''}`);
make('city-row', ':host{display:flex;height:30px;flex:none;background:#eee;border:1px solid #ccc;border-radius:3px;color:#555;line-height:28px}.n{width:161px;padding-left:10px;border-right:1px solid #ccc}.v{flex:1;padding-left:11px;white-space:nowrap}',
  e => `<div class="n"><fit-text w="72">Custom City</fit-text></div><div class="v"><fit-text w="59">${e.getAttribute('at')}</fit-text></div>`);
make('city-list', ':host{display:flex;flex:1}.c{width:278px;padding:14px 9px 0 13px}.stop{width:251px;height:30px;border:1px solid #d43f3a;background:#d9534f;border-radius:3px;color:#fff;display:flex;align-items:center;padding-left:35px;font:13px "DejaVu Sans",sans-serif;margin-bottom:18px}.sq{width:10px;height:10px;background:#fff;margin:-3px 14px 0 0}.rows{margin-left:14px;width:242px}',
  `<div class="c"><div class="stop"><div class="sq"></div><fit-text w="156" style="word-spacing:9px">Stop new city mode</fit-text></div><div class="rows"><city-row at="(706, 229)"></city-row><city-row at="(703, 301)"></city-row><city-row at="(702, 312)"></city-row></div></div><scroll-rail thumb="300"></scroll-rail>`);

make('poland-map', ':host{padding:4px 0 0 1px}svg{display:block}', () => {
  const coast = 'M421.700 740L425 741.500 433.300 740Q445 731 455 727.300L470 725.700Q484 722 503.300 712L515 711.700 523.300 708.700Q535 707 546.700 702L563.300 700 571 693 576 692 581 684 580 681Q584 678 591.700 672.300 592 665 610 660.700L620 659Q632 655 646.700 642.700 652 639 680 635L703.300 628H740.700L760 640Q771 648 775.300 658.300L770 656.700Q768 649 762 644.500L743.300 634.300 742.700 640 748.300 643.300 748.300 652Q753 655 752.700 673.300L756.700 681.700 763.300 683.300 768.300 687.700 780 691.700H803.300Q822 688 835.400 675.700';
  const east = 'L847 679.300Q872 685 908 685.700L919 688.300H950L951.600 690.300 998.500 689.300Q1045 686 1078 681.300L1080.800 674.300 1086 673.700 1094 676.700 1099.600 681.700 1103 686.700 1107.600 686 1117.700 693.300 1123.800 692.300 1130.300 701.700 1132.800 703.300 1137 719.300 1133.500 725.700 1138.600 729.300 1140.400 748.300 1145.500 755.700 1147.300 769';
  const ring = (x, y) => `<circle cx="${x}" cy="${y}" r="6.300" fill="#fff" stroke="#bdbdbd"/><circle cx="${x}" cy="${y}" r="3.700" fill="#b3b3b3"/>`;
  const dot = (x, y) => `<circle cx="${x}" cy="${y}" r="4.800" fill="#b5b5b5"/>`;
  const t = (s, x, y, w, z, c = '#b3b3b3') => `<text x="${x}" y="${y}" font-size="${z}" fill="${c}" textLength="${w}" lengthAdjust="spacingAndGlyphs">${s}</text>`;
  return `<svg width="861" height="169" viewBox="389 600 861 169" font-family="Liberation Sans,sans-serif"><defs>${gl('pl', '#fdf3c6', '#fbecc0')}</defs>
  <rect x="389" y="600" width="861" height="169" fill="#e2f3fc"/>
  <path d="M908 600L901 608 890 611.700 881 607.700 872 611.700 862 611 857.800 621.700 860.600 631.700Q859 646 854 655L835 681.700 850 700H1140V770H1251V600z" fill="#faf0ec"/>
  <path d="M905 610L910 600H957L958 607 944 614 932 613 919 611z" fill="#e2f3fc"/>
  <path d="M1034 600Q1056 607 1063.500 626.700L1059 634Q1058 640 1066.400 650 1064 670 1080 681L1120 700 1136 727Q1150 720 1164.600 720.700L1175 722Q1186 728 1194 718 1200 713 1208 717 1226 723 1251 703V600z" fill="#fefdf8"/>
  <path d="M389 714Q400 716 405 723L415 737 422 741 432 770H389z" fill="#faeeea"/>
  <path d="${coast}L816 705 823.500 695 839.700 688${east}H427L421.700 755z" fill="url(#pl)"/>
  <path d="M816 705L823.500 695 839.700 688${east}" fill="none" stroke="#f8b9c0" stroke-width="1.200"/>
  <path d="${coast}" fill="none" stroke="#f6aeb6" stroke-width="2"/>
  <path d="M566 701L574 697 571 695 581 690" fill="none" stroke="#f6aeb6" stroke-width="2"/>
  <g fill="#f1f8fc"><path d="M656 639L676 637 664 649z"/><circle cx="644" cy="651" r="4"/><path d="M454 729L463 728 452 751 447 768H430L421 757 408 763Q391 760 389 748L400 746Q409 751 416 744L436 748 449 742z"/><path d="M391 727l6 3 3-7 5 8-4 7-4-5-6-1z"/>
  <path d="M806 692L822 690 840 670 853 656 855 645 859 642 864 650 868 645 884 644 892 646 880 655 868 660 861 662 858 673 847 680 838 688 824 694 817 705 814 700 807 700z"/><path d="M998 702l6-1 1 5-3 7 2 6 4 2-1 6-6 8v8l-4 7-5-1 5-9 1-10 4-7-3-8-3-3z"/><path d="M993 755l10 2 8-2 4 4-4 4-6-1-2 4v5h-12z"/></g>
  <g fill="none" stroke="#cbe5f2" stroke-width="2.800"><path d="M784 692V704L775 722 778 737 782 742 777 755V769M780 741L794 727 805 724 806 715 812 710V700M784 700L795 696 800 699 806 698"/><path d="M888 646Q910 642 930 643L972 644 983 650Q1006 651 1006 673 1006 680 988 687L987 702" transform="translate(17 0)"/></g>
  ${dot(421.500, 742.500)}${dot(752, 669)}${dot(771.500, 725.500)}${ring(570, 710)}${ring(636.700, 675.500)}${ring(762, 691)}${ring(820, 715)}${ring(1092.500, 715)}${ring(903.500, 765)}<path d="M763 687L768 693 782 699" fill="none" stroke="#cbe5f2" stroke-width="2.800"/>
  ${t('BALTIC', 498, 632, 78, 23, '#cbcde3')}${t('SEA', 608, 632, 43, 23, '#cbcde3')}${t('Pomeranian Bay', 411, 677, 115, 15.500, '#c9cbe3')}${t('Gulf of Gdansk', 756, 631.500, 100, 16.500, '#c5cde0')}
  ${t('Russia', 912, 674.500, 71, 24, '#c9c4c4')}${t('Lithuania', 1119, 679.500, 95, 24, '#bab9b6')}
  ${t('Gdynia', 711, 679, 35, 12)}${t('Gdansk', 712, 698, 39, 12)}${t('Tczew', 732, 730, 33, 12)}${t('Slupsk', 639, 690, 35, 12)}${t('Koszalin', 578, 719, 43, 12)}${t('Swinoujscie', 425, 756, 60, 12)}${t('Elblag', 829, 721, 30, 12)}${t('Suwalki', 1041, 721, 40, 12)}${t('Olsztyn', 913, 771, 37, 12)}
  <text x="406" y="628" font-family="Liberation Serif,serif" font-size="22" fill="#000" textLength="222">Mouse position: 857, 278</text></svg>`;
});
make('web-page', ':host{display:flex;height:659px;background:#fafafa;font-size:13px}.m{width:1286px;display:flex;flex-direction:column}.s{margin:18px 13px 18px 14px;height:403px;flex:none}.b{display:flex;gap:14px;margin-left:14px;flex:1}.b info-panel{height:220px;flex:none}',
  `<div class="m"><nav-bar></nav-bar><info-panel class="s" heading="Computing statistics:" hw="122"><stats-view></stats-view></info-panel><div class="b"><info-panel style="width:294px" heading="Custom cities:" hw="84"><city-list></city-list></info-panel><info-panel style="width:864px"><poland-map></poland-map></info-panel></div></div><scroll-rail thumb="289" down></scroll-rail>`);
make('desktop-shell', ':host{width:1366px;height:768px;overflow:hidden}.r{display:flex}.w{width:1301px;height:744px;overflow:hidden}',
  `<system-bar></system-bar><div class="r"><side-launcher></side-launcher><div class="w"><tab-strip></tab-strip><tool-bar></tool-bar><bookmarks-bar></bookmarks-bar><web-page></web-page></div></div>`);

/* text run whose tracking is adjusted so that it spans the given width */
make('fit-text', ':host{display:block;flex:none;white-space:nowrap}span{display:inline-block}', '<span><slot></slot></span>', (e, root) => {
  const s = root.querySelector('span'), w = +e.getAttribute('w'), n = e.textContent.length;
  s.style.letterSpacing = (w - s.getBoundingClientRect().width) / n + 'px';
  e.style.width = w + 'px';
});
</script>
</body>
</html>
